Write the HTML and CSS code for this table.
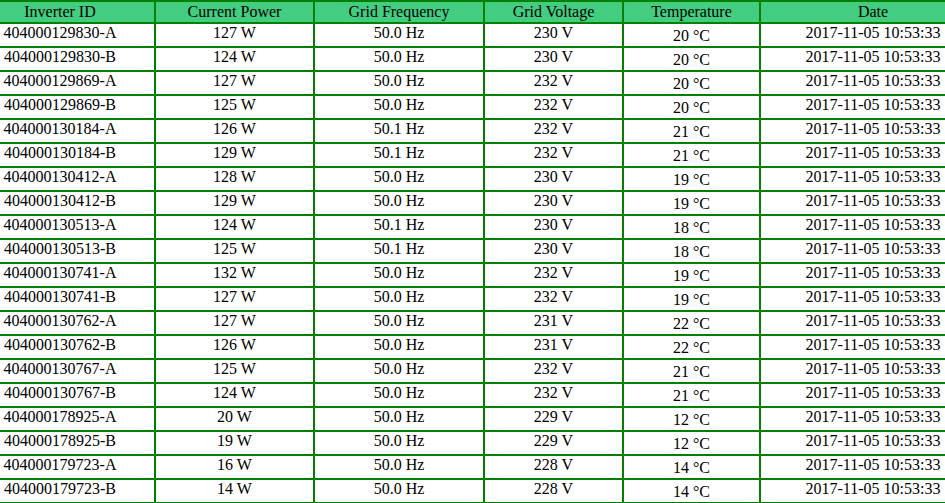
FILE: index.html
```html
<!DOCTYPE html>
<html>
<head>
<meta charset="utf-8">
<title>Inverters</title>
<link rel="stylesheet" href="styles.css">
</head>
<body>
<table class="grid">
<colgroup>
<col class="c-id"><col class="c-power"><col class="c-freq"><col class="c-volt"><col class="c-temp"><col class="c-date">
</colgroup>
<thead>
<tr><th>Inverter ID</th><th>Current Power</th><th>Grid Frequency</th><th>Grid Voltage</th><th>Temperature</th><th>Date</th></tr>
</thead>
<tbody>
<tr><td>404000129830-A</td><td>127 W</td><td>50.0 Hz</td><td>230 V</td><td class="temp">20 °C</td><td>2017-11-05 10:53:33</td></tr>
<tr><td>404000129830-B</td><td>124 W</td><td>50.0 Hz</td><td>230 V</td><td class="temp">20 °C</td><td>2017-11-05 10:53:33</td></tr>
<tr><td>404000129869-A</td><td>127 W</td><td>50.0 Hz</td><td>232 V</td><td class="temp">20 °C</td><td>2017-11-05 10:53:33</td></tr>
<tr><td>404000129869-B</td><td>125 W</td><td>50.0 Hz</td><td>232 V</td><td class="temp">20 °C</td><td>2017-11-05 10:53:33</td></tr>
<tr><td>404000130184-A</td><td>126 W</td><td>50.1 Hz</td><td>232 V</td><td class="temp">21 °C</td><td>2017-11-05 10:53:33</td></tr>
<tr><td>404000130184-B</td><td>129 W</td><td>50.1 Hz</td><td>232 V</td><td class="temp">21 °C</td><td>2017-11-05 10:53:33</td></tr>
<tr><td>404000130412-A</td><td>128 W</td><td>50.0 Hz</td><td>230 V</td><td class="temp">19 °C</td><td>2017-11-05 10:53:33</td></tr>
<tr><td>404000130412-B</td><td>129 W</td><td>50.0 Hz</td><td>230 V</td><td class="temp">19 °C</td><td>2017-11-05 10:53:33</td></tr>
<tr><td>404000130513-A</td><td>124 W</td><td>50.1 Hz</td><td>230 V</td><td class="temp">18 °C</td><td>2017-11-05 10:53:33</td></tr>
<tr><td>404000130513-B</td><td>125 W</td><td>50.1 Hz</td><td>230 V</td><td class="temp">18 °C</td><td>2017-11-05 10:53:33</td></tr>
<tr><td>404000130741-A</td><td>132 W</td><td>50.0 Hz</td><td>232 V</td><td class="temp">19 °C</td><td>2017-11-05 10:53:33</td></tr>
<tr><td>404000130741-B</td><td>127 W</td><td>50.0 Hz</td><td>232 V</td><td class="temp">19 °C</td><td>2017-11-05 10:53:33</td></tr>
<tr><td>404000130762-A</td><td>127 W</td><td>50.0 Hz</td><td>231 V</td><td class="temp">22 °C</td><td>2017-11-05 10:53:33</td></tr>
<tr><td>404000130762-B</td><td>126 W</td><td>50.0 Hz</td><td>231 V</td><td class="temp">22 °C</td><td>2017-11-05 10:53:33</td></tr>
<tr><td>404000130767-A</td><td>125 W</td><td>50.0 Hz</td><td>232 V</td><td class="temp">21 °C</td><td>2017-11-05 10:53:33</td></tr>
<tr><td>404000130767-B</td><td>124 W</td><td>50.0 Hz</td><td>232 V</td><td class="temp">21 °C</td><td>2017-11-05 10:53:33</td></tr>
<tr><td>404000178925-A</td><td>20 W</td><td>50.0 Hz</td><td>229 V</td><td class="temp">12 °C</td><td>2017-11-05 10:53:33</td></tr>
<tr><td>404000178925-B</td><td>19 W</td><td>50.0 Hz</td><td>229 V</td><td class="temp">12 °C</td><td>2017-11-05 10:53:33</td></tr>
<tr><td>404000179723-A</td><td>16 W</td><td>50.0 Hz</td><td>228 V</td><td class="temp">14 °C</td><td>2017-11-05 10:53:33</td></tr>
<tr><td>404000179723-B</td><td>14 W</td><td>50.0 Hz</td><td>228 V</td><td class="temp">14 °C</td><td>2017-11-05 10:53:33</td></tr>
</tbody>
</table>
</body>
</html>
```
FILE: styles.css
```css
html, body {
  margin: 0;
  padding: 0;
  background: #ffffff;
  overflow: hidden;
}

body {
  font-family: "Liberation Serif", "Times New Roman", serif;
  font-size: 16px;
  color: #000000;
}

.grid {
  border-collapse: collapse;
  table-layout: fixed;
  width: 1023px;
  margin-left: -36px;
  margin-top: 0;
}

.c-id { width: 190px; }
.c-power { width: 159px; }
.c-freq { width: 170px; }
.c-volt { width: 139px; }
.c-temp { width: 137px; }
.c-date { width: 226px; }

.grid th,
.grid td {
  border: 2px solid #008000;
  text-align: center;
  white-space: nowrap;
  font-weight: normal;
}

.grid th {
  background: #43cd80;
  line-height: 20px;
  padding: 0;
}

.grid td {
  line-height: 18px;
  padding: 0 0 4px;
}

.grid td.temp {
  padding: 3px 0 1px;
}
```
